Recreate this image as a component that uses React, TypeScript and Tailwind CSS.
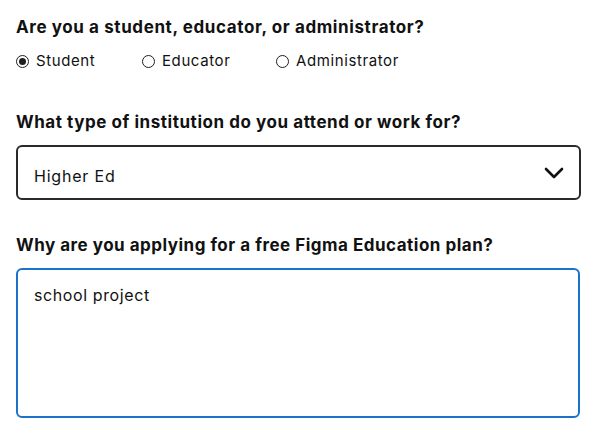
import React from 'react';

const Radio = ({ label, checked }: { label: string; checked?: boolean }) => (
  <label className="flex items-center gap-[7px]">
    <span className="flex h-[13px] w-[13px] items-center justify-center rounded-full border border-[#1e1e1e]">
      {checked && <span className="h-[7px] w-[7px] rounded-full bg-[#1e1e1e]" />}
    </span>
    <span>{label}</span>
  </label>
);

const App = () => {
  return (
    <div className="h-[446px] w-[599px] bg-white px-4 pt-[16px] text-[#111] [font-family:Inter,'Liberation_Sans',sans-serif]">
      <h2 className="text-[17px] font-bold leading-[22px] tracking-[0.6px]">Are you a student, educator, or administrator?</h2>
      <div className="mt-[13px] flex text-[15px] leading-[20px] tracking-[0.6px]">
        <div className="w-[126px]">
          <Radio label="Student" checked />
        </div>
        <div className="w-[134px]">
          <Radio label="Educator" />
        </div>
        <Radio label="Administrator" />
      </div>

      <h2 className="mt-[40px] text-[17px] font-bold leading-[22px] tracking-[0.55px]">What type of institution do you attend or work for?</h2>
      <div className="mt-[12px] flex h-[55px] w-[565px] items-center justify-between rounded-[6px] border-2 border-[#2a2a2a] pl-4 pr-[15px] text-[16px] tracking-[0.8px]">
        <span className="pt-[6px]">Higher Ed</span>
        <svg width="20" height="12" viewBox="0 0 20 12" fill="none">
          <path d="M2 2l8 8 8-8" stroke="#111" strokeWidth="2.6" strokeLinecap="round" strokeLinejoin="round" />
        </svg>
      </div>

      <h2 className="mt-[34px] text-[17px] font-bold leading-[22px] tracking-[0.5px]">Why are you applying for a free Figma Education plan?</h2>
      <div className="mt-[12px] h-[150px] w-[564px] rounded-[6px] border-2 border-[#1a73c8] px-4 pt-[14px] text-[16px] leading-[22px] tracking-[0.6px]">
        school project
      </div>
    </div>
  );
};

export default App;
